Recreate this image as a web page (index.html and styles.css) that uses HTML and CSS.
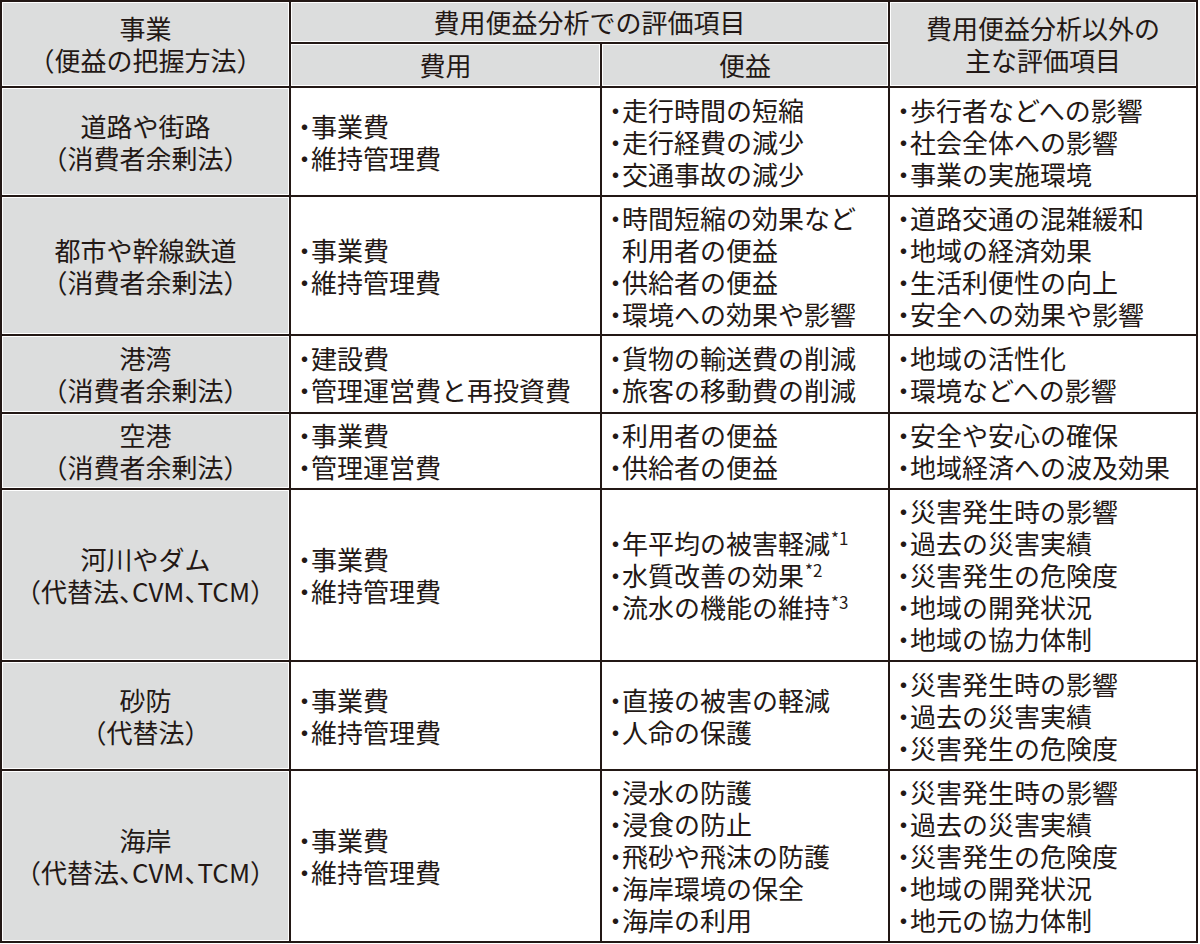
FILE: index.html
```html
<!DOCTYPE html>
<html lang="ja">
<head>
<meta charset="utf-8">
<title>費用便益分析の評価項目</title>
<link rel="stylesheet" href="styles.css">
</head>
<body>
<div class="table">
  <div class="cell head span-r"><div>事業<br>（便益の把握方法）</div></div>
  <div class="cell head span-c"><div>費用便益分析での評価項目</div></div>
  <div class="cell head span-r"><div>費用便益分析以外の<br>主な評価項目</div></div>
  <div class="cell head"><div>費用</div></div>
  <div class="cell head"><div>便益</div></div>

  <div class="cell name"><div>道路や街路<br>（消費者余剰法）</div></div>
  <div class="cell list"><div><span class="dot">・</span>事業費</div><div><span class="dot">・</span>維持管理費</div></div>
  <div class="cell list"><div><span class="dot">・</span>走行時間の短縮</div><div><span class="dot">・</span>走行経費の減少</div><div><span class="dot">・</span>交通事故の減少</div></div>
  <div class="cell list"><div><span class="dot">・</span>歩行者などへの影響</div><div><span class="dot">・</span>社会全体への影響</div><div><span class="dot">・</span>事業の実施環境</div></div>

  <div class="cell name"><div>都市や幹線鉄道<br>（消費者余剰法）</div></div>
  <div class="cell list"><div><span class="dot">・</span>事業費</div><div><span class="dot">・</span>維持管理費</div></div>
  <div class="cell list"><div><span class="dot">・</span>時間短縮の効果など</div><div class="indent">利用者の便益</div><div><span class="dot">・</span>供給者の便益</div><div><span class="dot">・</span>環境への効果や影響</div></div>
  <div class="cell list"><div><span class="dot">・</span>道路交通の混雑緩和</div><div><span class="dot">・</span>地域の経済効果</div><div><span class="dot">・</span>生活利便性の向上</div><div><span class="dot">・</span>安全への効果や影響</div></div>

  <div class="cell name"><div>港湾<br>（消費者余剰法）</div></div>
  <div class="cell list"><div><span class="dot">・</span>建設費</div><div><span class="dot">・</span>管理運営費と再投資費</div></div>
  <div class="cell list"><div><span class="dot">・</span>貨物の輸送費の削減</div><div><span class="dot">・</span>旅客の移動費の削減</div></div>
  <div class="cell list"><div><span class="dot">・</span>地域の活性化</div><div><span class="dot">・</span>環境などへの影響</div></div>

  <div class="cell name"><div>空港<br>（消費者余剰法）</div></div>
  <div class="cell list"><div><span class="dot">・</span>事業費</div><div><span class="dot">・</span>管理運営費</div></div>
  <div class="cell list"><div><span class="dot">・</span>利用者の便益</div><div><span class="dot">・</span>供給者の便益</div></div>
  <div class="cell list"><div><span class="dot">・</span>安全や安心の確保</div><div><span class="dot">・</span>地域経済への波及効果</div></div>

  <div class="cell name"><div>河川やダム<br><span class="halt">（代替法、CVM、TCM）</span></div></div>
  <div class="cell list"><div><span class="dot">・</span>事業費</div><div><span class="dot">・</span>維持管理費</div></div>
  <div class="cell list"><div><span class="dot">・</span>年平均の被害軽減<span class="sup">*1</span></div><div><span class="dot">・</span>水質改善の効果<span class="sup">*2</span></div><div><span class="dot">・</span>流水の機能の維持<span class="sup">*3</span></div></div>
  <div class="cell list"><div><span class="dot">・</span>災害発生時の影響</div><div><span class="dot">・</span>過去の災害実績</div><div><span class="dot">・</span>災害発生の危険度</div><div><span class="dot">・</span>地域の開発状況</div><div><span class="dot">・</span>地域の協力体制</div></div>

  <div class="cell name"><div>砂防<br>（代替法）</div></div>
  <div class="cell list"><div><span class="dot">・</span>事業費</div><div><span class="dot">・</span>維持管理費</div></div>
  <div class="cell list"><div><span class="dot">・</span>直接の被害の軽減</div><div><span class="dot">・</span>人命の保護</div></div>
  <div class="cell list"><div><span class="dot">・</span>災害発生時の影響</div><div><span class="dot">・</span>過去の災害実績</div><div><span class="dot">・</span>災害発生の危険度</div></div>

  <div class="cell name"><div>海岸<br><span class="halt">（代替法、CVM、TCM）</span></div></div>
  <div class="cell list"><div><span class="dot">・</span>事業費</div><div><span class="dot">・</span>維持管理費</div></div>
  <div class="cell list"><div><span class="dot">・</span>浸水の防護</div><div><span class="dot">・</span>浸食の防止</div><div><span class="dot">・</span>飛砂や飛沫の防護</div><div><span class="dot">・</span>海岸環境の保全</div><div><span class="dot">・</span>海岸の利用</div></div>
  <div class="cell list"><div><span class="dot">・</span>災害発生時の影響</div><div><span class="dot">・</span>過去の災害実績</div><div><span class="dot">・</span>災害発生の危険度</div><div><span class="dot">・</span>地域の開発状況</div><div><span class="dot">・</span>地元の協力体制</div></div>
</div>
</body>
</html>
```

FILE: styles.css
```css
html, body {
  margin: 0;
  padding: 0;
  background: #ffffff;
}

body {
  font-family: "Noto Sans CJK JP", "Noto Sans", sans-serif;
  font-size: 26px;
  line-height: 32px;
  color: #231815;
}

.table {
  display: grid;
  width: 1198px;
  box-sizing: border-box;
  padding: 2px;
  gap: 2px;
  background: #231815;
  grid-template-columns: 287px 309px 286px 306px;
  grid-template-rows: 40px 42px 107px 137px 76px 74px 170px 107px 170px;
}

.cell {
  display: flex;
  align-items: center;
  background: #ffffff;
  white-space: nowrap;
}

.head,
.name {
  background: #dcdddd;
  box-shadow: inset 0 0 0 1px #ffffff;
  justify-content: center;
  text-align: center;
}

.span-r {
  grid-row: span 2;
}

.span-c {
  grid-column: span 2;
}

.list {
  flex-direction: column;
  align-items: stretch;
  justify-content: center;
  padding-left: 7px;
}

.dot {
  font-feature-settings: "halt";
}

.indent {
  padding-left: 13px;
}

.halt {
  font-feature-settings: "halt";
}

.sup {
  font-size: 17px;
  line-height: 0;
  vertical-align: 9px;
  margin-left: 1px;
}
```
